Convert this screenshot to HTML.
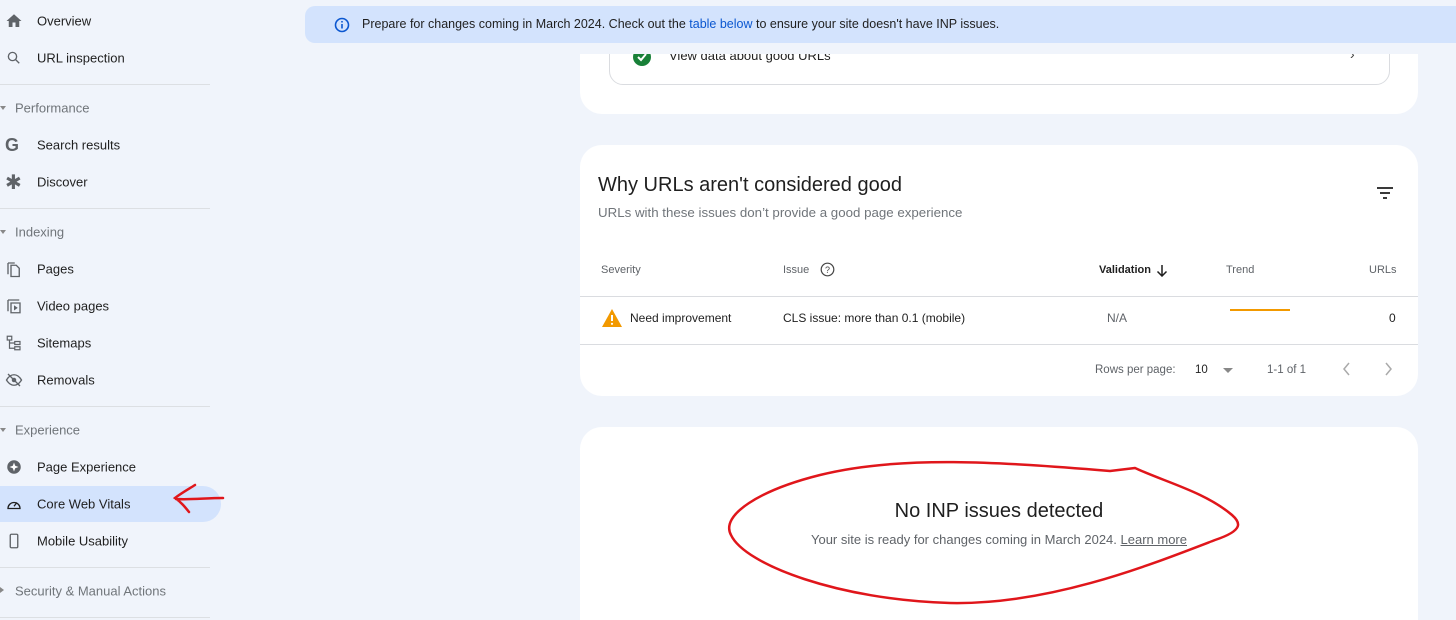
<!DOCTYPE html>
<html><head><meta charset="utf-8"><style>
*{margin:0;padding:0;box-sizing:border-box}
html,body{width:1456px;height:620px;overflow:hidden}
body{background:#f0f4fb;font-family:"Liberation Sans",sans-serif;position:relative;color:#1f1f1f}
.abs{position:absolute}
.nav{position:absolute;left:37px;font-size:13px;color:#1f1f1f;transform:translateY(-50%)}
.sec{position:absolute;left:15px;font-size:13px;color:#70757a;transform:translateY(-50%)}
.tri{position:absolute;left:0;width:0;height:0;border-left:3px solid transparent;border-right:3px solid transparent;border-top:4px solid #888}
.div{position:absolute;left:0;width:210px;height:1px;background:#dcdfe3}
.ic{position:absolute;left:5px;width:18px;height:18px;transform:translateY(-50%)}
.card{position:absolute;left:580px;width:838px;background:#fff;border-radius:22px}
.th{position:absolute;font-size:11px;color:#5f6368;transform:translateY(-50%)}
.td{position:absolute;font-size:12px;color:#1f1f1f;transform:translateY(-50%)}
</style></head><body>

<svg class="ic" style="top:21px" viewBox="0 0 24 24"><path d="M10 20v-6h4v6h5v-8h3L12 3 2 12h3v8z" fill="#5f6368"/></svg>
<div class="nav" style="top:21px">Overview</div>
<svg class="ic" style="top:58px" viewBox="0 0 24 24"><circle cx="10" cy="10" r="5.5" fill="none" stroke="#5f6368" stroke-width="1.8"/><path d="M14 14l5 5" stroke="#5f6368" stroke-width="1.8"/></svg>
<div class="nav" style="top:58px">URL inspection</div>
<div class="div" style="top:84px"></div>
<div class="tri" style="top:106px"></div><div class="sec" style="top:108px">Performance</div>
<div class="ic" style="top:145px;font-weight:bold;font-size:18px;color:#5f6368;line-height:18px">G</div>
<div class="nav" style="top:145px">Search results</div>
<div class="ic" style="top:182px;font-size:20px;color:#5f6368;line-height:18px;font-family:'DejaVu Sans'">✱</div>
<div class="nav" style="top:182px">Discover</div>
<div class="div" style="top:208px"></div>
<div class="tri" style="top:230px"></div><div class="sec" style="top:232px">Indexing</div>
<svg class="ic" style="top:269px" viewBox="0 0 24 24"><path d="M4 4v15M4 4h9M8 7h7l4 4v11H8z" fill="none" stroke="#5f6368" stroke-width="1.8"/></svg>
<div class="nav" style="top:269px">Pages</div>
<svg class="ic" style="top:306px" viewBox="0 0 24 24"><path d="M4 4v15M4 4h15M8 8h12v13H8z" fill="none" stroke="#5f6368" stroke-width="1.8"/><path d="M12 11l5 3.5-5 3.5z" fill="#5f6368"/></svg>
<div class="nav" style="top:306px">Video pages</div>
<svg class="ic" style="top:343px" viewBox="0 0 24 24"><path d="M3 3h6v5H3zM13 10h7v4h-7zM13 17h7v4h-7zM6 8v11h7M6 12h7" fill="none" stroke="#5f6368" stroke-width="1.6"/></svg>
<div class="nav" style="top:343px">Sitemaps</div>
<svg class="ic" style="top:380px" viewBox="0 0 24 24"><path d="M2 12c3-5 7-7 10-7s7 2 10 7c-3 5-7 7-10 7s-7-2-10-7z" fill="none" stroke="#5f6368" stroke-width="1.8"/><circle cx="12" cy="12" r="3" fill="#5f6368"/><path d="M4 4l16 16" stroke="#5f6368" stroke-width="1.8"/></svg>
<div class="nav" style="top:380px">Removals</div>
<div class="div" style="top:406px"></div>
<div class="tri" style="top:428px"></div><div class="sec" style="top:430px">Experience</div>
<svg class="ic" style="top:467px" viewBox="0 0 24 24"><circle cx="12" cy="12" r="9" fill="#5f6368"/><path d="M12 6l1.6 4.4L18 12l-4.4 1.6L12 18l-1.6-4.4L6 12l4.4-1.6z" fill="#fff"/></svg>
<div class="nav" style="top:467px">Page Experience</div>
<div class="abs" style="left:-20px;top:486px;width:241px;height:36px;background:#d3e3fd;border-radius:18px"></div>
<svg class="ic" style="top:504px" viewBox="0 0 24 24"><path d="M4 18a8 8 0 1 1 16 0z" fill="none" stroke="#1f1f1f" stroke-width="1.8"/><path d="M12 15l4-5" stroke="#1f1f1f" stroke-width="1.8"/></svg>
<div class="nav" style="top:504px">Core Web Vitals</div>
<svg class="ic" style="top:541px" viewBox="0 0 24 24"><rect x="7" y="3" width="10" height="18" rx="1.5" fill="none" stroke="#5f6368" stroke-width="1.8"/></svg>
<div class="nav" style="top:541px">Mobile Usability</div>
<div class="div" style="top:567px"></div>
<div class="abs" style="left:0;top:587px;border-top:3px solid transparent;border-bottom:3px solid transparent;border-left:4px solid #888"></div>
<div class="sec" style="top:591px">Security &amp; Manual Actions</div>
<div class="div" style="top:617px"></div>
<svg class="abs" style="left:170px;top:482px" width="56" height="34" viewBox="0 0 56 34"><path d="M25 3C17 8 10 12 5 16c6 4 10 9 14 14M6 17c14 1 30-1 47-1" fill="none" stroke="#e0161b" stroke-width="2.5" stroke-linecap="round"/></svg>

<div class="card" style="top:-40px;height:154px">
  <div class="abs" style="left:29px;top:0;width:781px;height:125px;border:1px solid #dadce0;border-radius:14px"></div>
  <svg class="abs" style="left:53px;top:88px" width="18" height="18" viewBox="0 0 18 18"><circle cx="9" cy="9" r="9" fill="#188038"/><path d="M5 9l3 3 5-6" fill="none" stroke="#fff" stroke-width="2"/></svg>
  <div class="abs" style="left:89px;top:88px;font-size:13px">View data about good URLs</div>
  <div class="abs" style="left:770px;top:86px;font-size:14px;color:#444">›</div>
</div>
<div class="abs" style="left:290px;top:0;width:1166px;height:54px;background:#f0f4fb"></div>
<div class="abs" style="left:305px;top:6px;width:1160px;height:37px;background:#d3e3fd;border-radius:10px 0 0 10px"></div>
<svg class="abs" style="left:334px;top:17px" width="16" height="16" viewBox="0 0 16 16"><circle cx="8" cy="8" r="6.5" fill="none" stroke="#0b57d0" stroke-width="1.6"/><path d="M8 7v4.5" stroke="#0b57d0" stroke-width="1.6"/><circle cx="8" cy="4.8" r="0.9" fill="#0b57d0"/></svg>
<div class="abs" style="left:362px;top:17px;font-size:12.5px;color:#1f1f1f">Prepare for changes coming in March 2024. Check out the <span style="color:#0b57d0">table below</span> to ensure your site doesn't have INP issues.</div>

<div class="card" style="top:145px;height:251px">
  <div class="abs" style="left:18px;top:29px;font-size:20px;color:#1f1f1f">Why URLs aren't considered good</div>
  <div class="abs" style="left:18px;top:60px;font-size:13.3px;color:#70757a">URLs with these issues don’t provide a good page experience</div>
  <svg class="abs" style="left:796px;top:41px" width="18" height="14" viewBox="0 0 18 14"><path d="M1 2h16M4 7h10M7 12h4" stroke="#1f1f1f" stroke-width="1.8"/></svg>
  <div class="th" style="left:21px;top:125px">Severity</div>
  <div class="th" style="left:203px;top:125px">Issue</div>
  <svg class="abs" style="left:240px;top:117px" width="15" height="15" viewBox="0 0 15 15"><circle cx="7.5" cy="7.5" r="6.3" fill="none" stroke="#444" stroke-width="1.2"/><text x="7.5" y="11" font-size="9" text-anchor="middle" fill="#444" font-family="Liberation Sans">?</text></svg>
  <div class="th" style="left:519px;top:125px;color:#1f1f1f;font-weight:bold">Validation</div>
  <svg class="abs" style="left:576px;top:119px" width="12" height="13" viewBox="0 0 12 13"><path d="M6 1v11M1.5 7.5L6 12l4.5-4.5" fill="none" stroke="#1f1f1f" stroke-width="1.5"/></svg>
  <div class="th" style="left:646px;top:125px">Trend</div>
  <div class="th" style="left:789px;top:125px">URLs</div>
  <div class="abs" style="left:0;top:151px;width:838px;height:1px;background:#dadce0"></div>
  <svg class="abs" style="left:21px;top:163px" width="22" height="20" viewBox="0 0 22 20"><path d="M11 1L21 19H1z" fill="#f29900"/><path d="M11 7v6" stroke="#fff" stroke-width="2"/><circle cx="11" cy="15.8" r="1.1" fill="#fff"/></svg>
  <div class="td" style="left:50px;top:173px">Need improvement</div>
  <div class="td" style="left:203px;top:173px">CLS issue: more than 0.1 (mobile)</div>
  <div class="td" style="left:527px;top:173px;color:#5f6368">N/A</div>
  <div class="abs" style="left:650px;top:164px;width:60px;height:2px;background:#f29900"></div>
  <div class="td" style="left:809px;top:173px">0</div>
  <div class="abs" style="left:0;top:199px;width:838px;height:1px;background:#dadce0"></div>
  <div class="td" style="left:515px;top:225px;color:#5f6368;font-size:11.5px">Rows per page:</div>
  <div class="td" style="left:615px;top:225px;font-size:11.5px">10</div>
  <div class="abs" style="left:643px;top:223px;border-left:5px solid transparent;border-right:5px solid transparent;border-top:5px solid #888"></div>
  <div class="td" style="left:687px;top:225px;color:#5f6368;font-size:11.5px">1-1 of 1</div>
  <svg class="abs" style="left:762px;top:217px" width="10" height="14" viewBox="0 0 10 14"><path d="M7 1L2 7l5 6" fill="none" stroke="#aaa" stroke-width="1.5"/></svg>
  <svg class="abs" style="left:803px;top:217px" width="10" height="14" viewBox="0 0 10 14"><path d="M3 1l5 6-5 6" fill="none" stroke="#aaa" stroke-width="1.5"/></svg>
</div>

<div class="card" style="top:427px;height:220px">
  <div class="abs" style="left:0;width:838px;top:73px;text-align:center;font-size:20px;color:#1f1f1f">No INP issues detected</div>
  <div class="abs" style="left:0;width:838px;top:105px;text-align:center;font-size:13px;color:#5f6368">Your site is ready for changes coming in March 2024. <span style="text-decoration:underline">Learn more</span></div>
</div>
<svg class="abs" style="left:0;top:0" width="1456" height="620"><path d="M1110,471 C1000,462 900,455 820,475 C760,490 720,515 731,535 C745,565 840,600 950,603 C1050,605 1150,565 1215,540 C1245,530 1240,522 1232,515 C1205,492 1165,482 1135,468 L1110,471" fill="none" stroke="#e0161b" stroke-width="2.5" stroke-linecap="round" stroke-linejoin="round"/></svg>
</body></html>
